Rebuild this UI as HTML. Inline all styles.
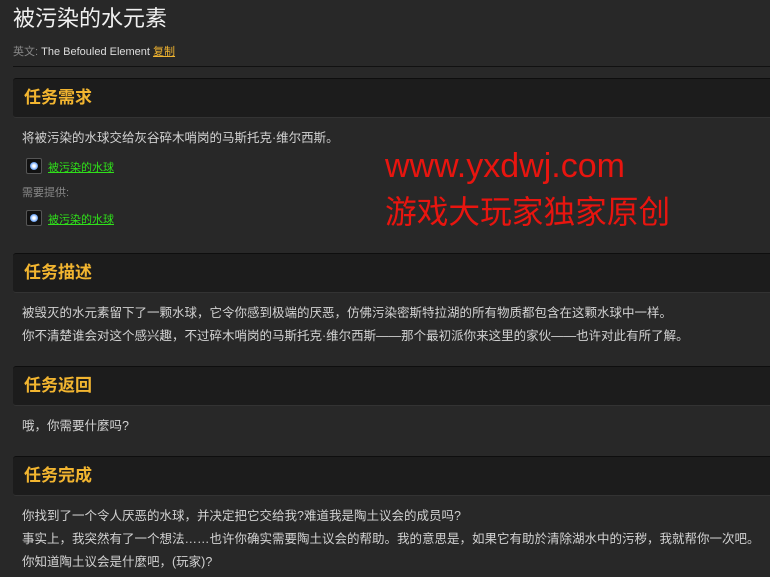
<!DOCTYPE html>
<html><head><meta charset="utf-8"><style>
*{margin:0;padding:0;box-sizing:border-box}
body{width:770px;height:577px;overflow:hidden;background:#282828;font-family:"Liberation Sans","Noto Sans CJK SC",sans-serif;color:#d0d0d0;position:relative}
.a{position:absolute;white-space:nowrap}
h1{position:absolute;left:13px;top:5px;font-size:22px;font-weight:normal;color:#f0f0f0;line-height:28px}
.hr{position:absolute;left:13px;right:0;top:66px;height:1px;background:#111}
.hd{position:absolute;left:13px;right:-10px;height:40px;background:#1c1c1c;border-top:1px solid #0e0e0e;border-bottom:1px solid #333;border-radius:3px}
.hd span{position:absolute;left:11px;top:9px;font-size:17px;font-weight:bold;color:#f2b530;line-height:20px}
.t{font-size:12.5px;color:#d2d2d2;line-height:16px}
.ic{position:absolute;width:16px;height:16px;background:#111;border:1px solid #555;border-radius:2px}
.ic:after{content:"";position:absolute;left:3px;top:3px;width:8px;height:8px;border-radius:50%;background:radial-gradient(#fff 20%,#7ab0ff 60%,#123 100%)}
.lk{font-size:11px;color:#2fe01a;text-decoration:underline}
.wm{color:#e8150f;line-height:36px}
</style></head><body>
<h1>被污染的水元素</h1>
<div class="a" style="left:13px;top:43px;font-size:11px;color:#888">英文: <span style="color:#ddd">The Befouled Element</span> <span style="color:#f2b530;text-decoration:underline">复制</span></div>
<div class="hr"></div>
<div class="hd" style="top:78px"><span>任务需求</span></div>
<div class="a t" style="left:22px;top:130px">将被污染的水球交给灰谷碎木哨岗的马斯托克·维尔西斯。</div>
<div class="ic" style="left:26px;top:158px"></div><div class="a lk" style="left:48px;top:159px">被污染的水球</div>
<div class="a" style="left:22px;top:184px;font-size:11px;color:#888">需要提供:</div>
<div class="ic" style="left:26px;top:210px"></div><div class="a lk" style="left:48px;top:211px">被污染的水球</div>
<div class="a wm" style="left:385px;top:148px;font-size:34px">www.yxdwj.com</div>
<div class="a wm" style="left:385px;top:194px;font-size:31.7px">游戏大玩家独家原创</div>
<div class="hd" style="top:253px"><span>任务描述</span></div>
<div class="a t" style="left:22px;top:305px">被毁灭的水元素留下了一颗水球，它令你感到极端的厌恶，仿佛污染密斯特拉湖的所有物质都包含在这颗水球中一样。</div>
<div class="a t" style="left:22px;top:328px">你不清楚谁会对这个感兴趣，不过碎木哨岗的马斯托克·维尔西斯——那个最初派你来这里的家伙——也许对此有所了解。</div>
<div class="hd" style="top:366px"><span>任务返回</span></div>
<div class="a t" style="left:22px;top:418px">哦，你需要什麼吗?</div>
<div class="hd" style="top:456px"><span>任务完成</span></div>
<div class="a t" style="left:22px;top:508px">你找到了一个令人厌恶的水球，并决定把它交给我?难道我是陶土议会的成员吗?</div>
<div class="a t" style="left:22px;top:531px">事实上，我突然有了一个想法……也许你确实需要陶土议会的帮助。我的意思是，如果它有助於清除湖水中的污秽，我就帮你一次吧。</div>
<div class="a t" style="left:22px;top:554px">你知道陶土议会是什麼吧，(玩家)?</div>
</body></html>
